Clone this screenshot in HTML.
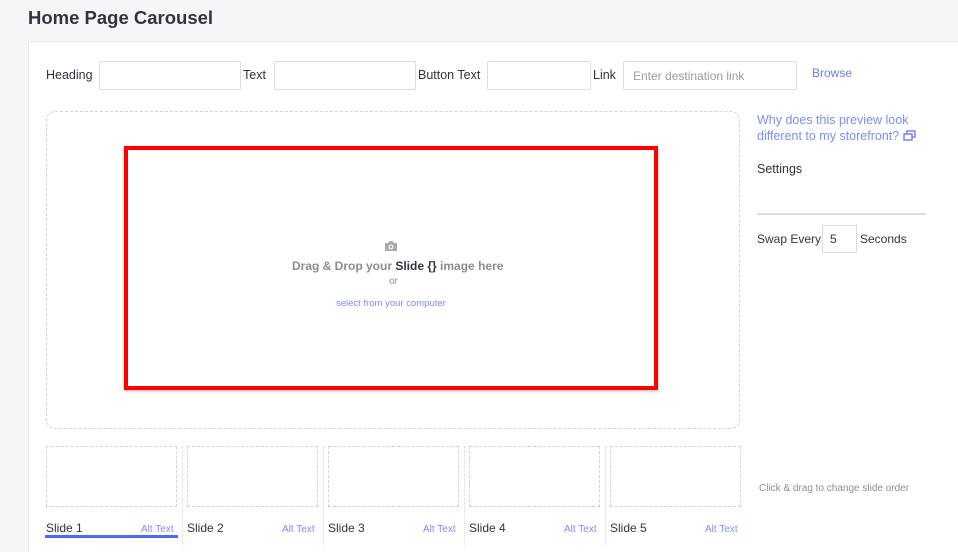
<!DOCTYPE html>
<html><head><meta charset="utf-8"><style>
*{margin:0;padding:0;box-sizing:border-box}
body{width:958px;height:552px;background:#f5f6f8;font-family:"Liberation Sans",sans-serif;color:#313440;position:relative;overflow:hidden}
.a{position:absolute;white-space:nowrap}
h1{position:absolute;left:28px;top:7px;font-size:18.5px;font-weight:bold;color:#313440}
.panel{position:absolute;left:28px;top:41px;right:0;bottom:0;background:#fff;border:1px solid #e4e6ea;border-right:none;border-bottom:none}
.lbl{font-size:12.5px;color:#313440}
.inp{position:absolute;height:29px;top:61px;border:1px solid #d9dce1;border-radius:2px;background:#fff;font-size:12px;color:#9a9ca3;padding:7px 9px}
.lnk{color:#6e7cf0}
.dash{position:absolute;border:1px dashed #cfd3dc}
.sl{position:absolute;top:521px;font-size:12px}
.alt{position:absolute;top:524px;font-size:10px;color:#7f8cf5}
.sep{position:absolute;top:446px;height:100px;border-left:1px dotted #d4d7de}
</style></head><body>
<h1>Home Page Carousel</h1>
<div class="panel"></div>
<div class="a lbl" style="left:46px;top:68px">Heading</div>
<div class="inp" style="left:99px;width:142px"></div>
<div class="a lbl" style="left:243px;top:68px">Text</div>
<div class="inp" style="left:274px;width:142px"></div>
<div class="a lbl" style="left:418px;top:68px">Button Text</div>
<div class="inp" style="left:487px;width:104px"></div>
<div class="a lbl" style="left:593px;top:68px">Link</div>
<div class="inp" style="left:623px;width:174px">Enter destination link</div>
<div class="a lnk" style="left:812px;top:66px;font-size:12px">Browse</div>

<div class="dash" style="left:46px;top:111px;width:694px;height:318px;border-radius:9px"></div>
<div class="a" style="left:124px;top:146px;width:534px;height:244px;border:4px solid #f00;box-shadow:0 1px 3px rgba(0,0,0,.3)"></div>
<svg class="a" style="left:384px;top:240px" width="14" height="12" viewBox="0 0 14 12"><path d="M1 3h3l1.5-2h3L10 3h3v8H1z" fill="#a8aab0"/><circle cx="7" cy="7" r="2.4" fill="#fff"/><circle cx="7" cy="7" r="1.4" fill="#a8aab0"/></svg>
<div class="a" style="left:292px;top:259px;font-size:12px;font-weight:bold;color:#8a8c93">Drag &amp; Drop your <span style="color:#313440">Slide</span> <span style="color:#313440">{}</span> image here</div>
<div class="a" style="left:389px;top:276px;font-size:10px;color:#8a8c93">or</div>
<div class="a lnk" style="left:336px;top:298px;font-size:9.5px;color:#7f8cf5">select from your computer</div>

<div class="a lnk" style="left:757px;top:112px;font-size:12.5px;line-height:16px;color:#7f8cf5">Why does this preview look<br>different to my storefront? <svg width="13" height="11" viewBox="0 0 13 11" style="vertical-align:-1px"><rect x="4" y="1" width="8" height="6" fill="none" stroke="#6e7cf0" stroke-width="1.4"/><rect x="1" y="4" width="8" height="6" fill="#fff" stroke="#6e7cf0" stroke-width="1.4"/></svg></div>
<div class="a lbl" style="left:757px;top:162px">Settings</div>
<div class="a" style="left:757px;top:213px;width:169px;border-top:2px solid #dcdde0"></div>
<div class="a lbl" style="left:757px;top:232px;font-size:12px">Swap Every</div>
<div class="a" style="left:822px;top:225px;width:35px;height:28px;border:1px solid #d9dce1;font-size:12px;padding:6px 7px">5</div>
<div class="a lbl" style="left:860px;top:232px;font-size:12px">Seconds</div>

<div class="dash" style="left:46px;top:446px;width:131px;height:61px"></div>
<div class="dash" style="left:187px;top:446px;width:131px;height:61px"></div>
<div class="dash" style="left:328px;top:446px;width:131px;height:61px"></div>
<div class="dash" style="left:469px;top:446px;width:131px;height:61px"></div>
<div class="dash" style="left:610px;top:446px;width:131px;height:61px"></div>
<div class="sep" style="left:182px"></div><div class="sep" style="left:323px"></div><div class="sep" style="left:464px"></div><div class="sep" style="left:605px"></div>
<div class="sl" style="left:46px">Slide 1</div><div class="alt" style="left:141px">Alt Text</div>
<div class="a" style="left:45px;top:535px;width:133px;height:3px;background:#4a6cf7"></div>
<div class="sl" style="left:187px">Slide 2</div><div class="alt" style="left:282px">Alt Text</div>
<div class="sl" style="left:328px">Slide 3</div><div class="alt" style="left:423px">Alt Text</div>
<div class="sl" style="left:469px">Slide 4</div><div class="alt" style="left:564px">Alt Text</div>
<div class="sl" style="left:610px">Slide 5</div><div class="alt" style="left:705px">Alt Text</div>
<div class="a" style="left:759px;top:483px;font-size:10px;color:#8a8c93">Click &amp; drag to change slide order</div>
</body></html>
